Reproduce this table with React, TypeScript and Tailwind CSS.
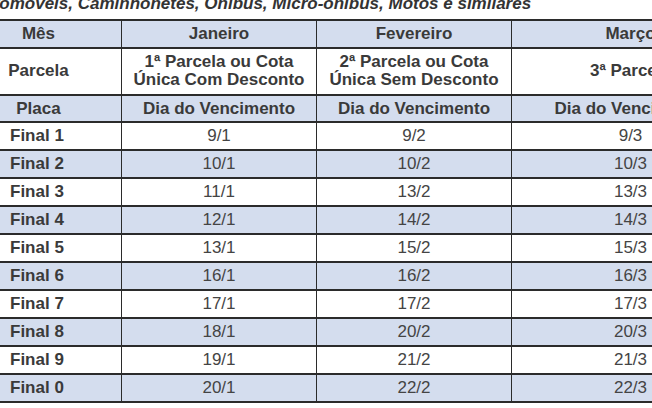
const rows = [
  ["Final 1", "9/1", "9/2", "9/3"],
  ["Final 2", "10/1", "10/2", "10/3"],
  ["Final 3", "11/1", "13/2", "13/3"],
  ["Final 4", "12/1", "14/2", "14/3"],
  ["Final 5", "13/1", "15/2", "15/3"],
  ["Final 6", "16/1", "16/2", "16/3"],
  ["Final 7", "17/1", "17/2", "17/3"],
  ["Final 8", "18/1", "20/2", "20/3"],
  ["Final 9", "19/1", "21/2", "21/3"],
  ["Final 0", "20/1", "22/2", "22/3"],
];

const cell = "border-x border-y-2 border-[#2b2b2b] p-0";

export default function App() {
  return (
    <div className="w-[652px] h-[408px] overflow-hidden bg-white font-['Liberation_Sans',Arial,sans-serif] text-[#3a3a3a]">
      <p className="-mt-[5px] ml-[-29px] h-[24px] whitespace-nowrap text-[17px] leading-[17px] font-bold italic text-[#333]">
        Automóveis, Caminhonetes, Ônibus, Micro-ônibus, Motos e similares
      </p>
      <table className="table-fixed border-collapse w-[750px] -ml-[1px]">
        <colgroup>
          <col className="w-[122px]" />
          <col className="w-[195px]" />
          <col className="w-[195px]" />
          <col className="w-[238px]" />
        </colgroup>
        <thead className="text-[17px] font-bold">
          <tr className="h-[27px] bg-[#d4ddee]">
            <th className={`${cell} pr-[44px] text-center font-bold`}>Mês</th>
            <th className={`${cell} text-center font-bold`}>Janeiro</th>
            <th className={`${cell} text-center font-bold`}>Fevereiro</th>
            <th className={`${cell} text-center font-bold`}>Março</th>
          </tr>
          <tr className="h-[47px] bg-white leading-[18px]">
            <th className={`${cell} pr-[44px] text-center font-bold`}>Parcela</th>
            <th className={`${cell} text-center font-bold`}>
              1ª Parcela ou Cota
              <br />
              Única Com Desconto
            </th>
            <th className={`${cell} text-center font-bold`}>
              2ª Parcela ou Cota
              <br />
              Única Sem Desconto
            </th>
            <th className={`${cell} text-center font-bold`}>3ª Parcela</th>
          </tr>
          <tr className="h-[27px] bg-[#d4ddee]">
            <th className={`${cell} pr-[44px] text-center font-bold`}>Placa</th>
            <th className={`${cell} text-center font-bold`}>Dia do Vencimento</th>
            <th className={`${cell} text-center font-bold`}>Dia do Vencimento</th>
            <th className={`${cell} text-center font-bold`}>Dia do Vencimento</th>
          </tr>
        </thead>
        <tbody className="text-[17px]">
          {rows.map((r, i) => (
            <tr key={r[0]} className={`h-[28px] ${i % 2 === 1 ? "bg-[#d4ddee]" : "bg-white"}`}>
              <td className={`${cell} pl-[10px] font-bold`}>{r[0]}</td>
              <td className={`${cell} text-center text-[#444]`}>{r[1]}</td>
              <td className={`${cell} text-center text-[#444]`}>{r[2]}</td>
              <td className={`${cell} text-center text-[#444]`}>{r[3]}</td>
            </tr>
          ))}
        </tbody>
      </table>
    </div>
  );
}
